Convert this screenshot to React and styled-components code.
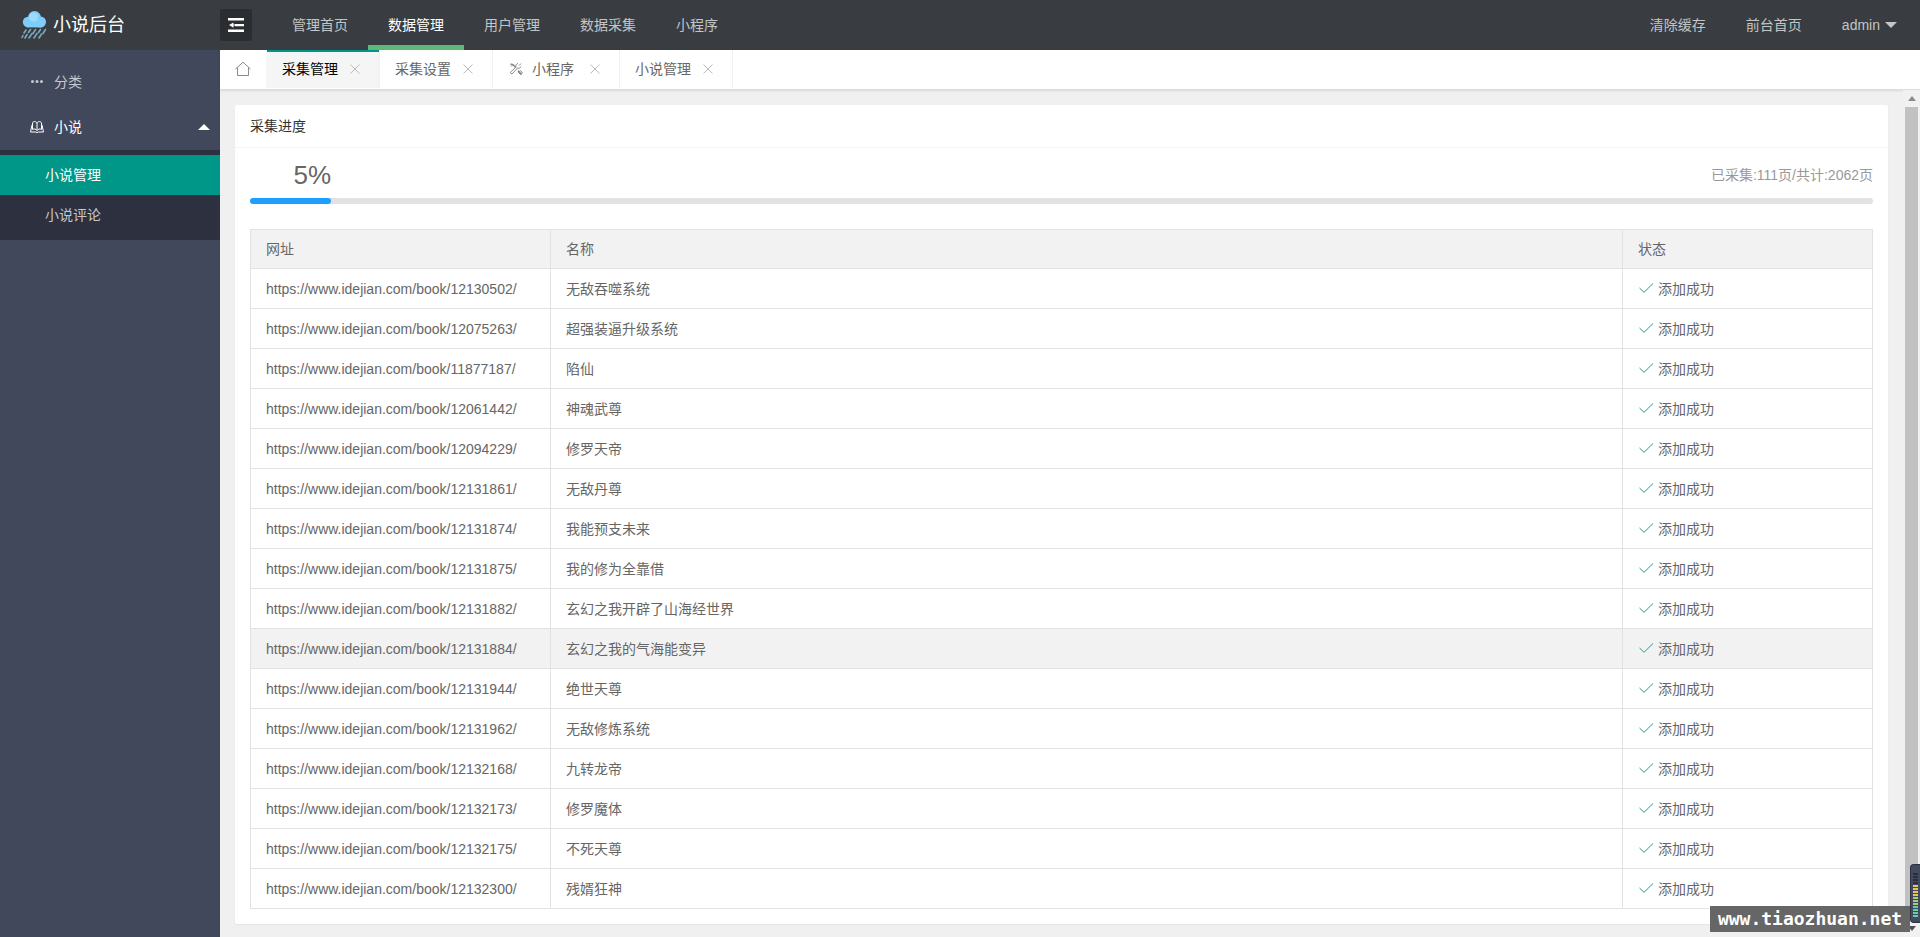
import React, { useState } from 'react'
import styled, { createGlobalStyle } from 'styled-components';

const GlobalStyle = createGlobalStyle`
  *{
    box-sizing:border-box;
  }
  body{
    margin:0;
    background-color:#f0f0f0;
    color:#666;
    font-family:"Liberation Sans", "Noto Sans CJK SC", sans-serif;
    font-size:14px;
    line-height:24px;
  }
  a{
    color:inherit;
    text-decoration:none;
  }
  button{
    padding:0;
    border:0;
    background:none;
    color:inherit;
    font:inherit;
    cursor:pointer;
  }
  svg{
    display:block;
    flex:none;
  }
`
const Page = styled.div`
  display:flex;
  flex-direction:column;
  height:100vh;
  overflow:hidden;
`
const Header = styled.header`
  display:flex;
  flex:none;
  height:50px;
  background-color:#393d41;
  color:#c3c5c6;
`
const Logo = styled.a`
  display:flex;
  align-items:center;
  gap:6px;
  width:220px;
  padding-left:21px;
  font-size:18px;
  color:#fff;
`
const Toggle = styled.button`
  display:flex;
  align-items:center;
  justify-content:center;
  align-self:center;
  width:32px;
  height:32px;
  margin-right:20px;
  border-radius:2px;
  background-color:#2b2e31;
`
const Nav = styled.nav`
  display:flex;
  &:last-child{
    margin-left:auto;
    padding-right:3px;
  }
`
const NavLink = styled.a`
  display:flex;
  align-items:center;
  gap:5px;
  padding:5px 20px 0;
  padding-bottom:${(props) => (props.$active ? '0' : '5px')};
  border-bottom:${(props) => (props.$active ? '5px solid #5fb878' : '0')};
  color:${(props) => (props.$active ? '#fff' : 'inherit')};
`
const Body = styled.div`
  display:flex;
  flex:1;
  min-height:0;
`
const Side = styled.aside`
  flex:none;
  width:220px;
  padding-top:10px;
  background-color:#42485b;
  color:#c6c8ce;
`
const SideLink = styled.a`
  display:flex;
  align-items:center;
  height:45px;
  padding:0 10px 2px 29px;
  color:${(props) => (props.$open ? '#fff' : 'inherit')};
  span{
    flex:1;
    margin-left:9px;
  }
`
const SubMenu = styled.div`
  padding:5px 0;
  background-color:#2d303e;
`
const SubLink = styled.a`
  display:block;
  padding-left:45px;
  line-height:40px;
  background-color:${(props) => (props.$active ? '#009688' : 'transparent')};
  color:${(props) => (props.$active ? '#fff' : 'inherit')};
`
const Main = styled.main`
  display:flex;
  flex-direction:column;
  flex:1;
  min-width:0;
`
const Tabs = styled.div`
  display:flex;
  flex:none;
  height:40px;
  padding-bottom:1px;
  border-bottom:1px solid #ddd;
  background-color:#fff;
  box-shadow:0 1px 2px rgba(0,0,0,.1);
`
const HomeTab = styled.button`
  display:flex;
  align-items:center;
  justify-content:center;
  width:47px;
  border-right:1px solid #f6f6f6;
`
const Tab = styled.div`
  display:flex;
  align-items:center;
  padding:0 14px 0 15px;
  border-right:1px solid #f0f0f0;
  background-color:${(props) => (props.$active ? '#f5f5f5' : '#fff')};
  box-shadow:${(props) => (props.$active ? 'inset 0 2px #009688' : 'none')};
  color:${(props) => (props.$active ? '#000' : '#666')};
`
const TabTitle = styled.button`
  display:flex;
  align-items:center;
  gap:8px;
  margin-right:${(props) => (props.$icon ? '11px' : '7px')};
`
const Close = styled.button`
  display:flex;
  align-items:center;
  justify-content:center;
  width:20px;
  height:20px;
`
const Frame = styled.div`
  display:flex;
  flex:1;
  min-height:0;
`
const Content = styled.div`
  flex:1;
  min-width:0;
  padding:15px;
  overflow:hidden;
`
const Card = styled.section`
  border-radius:2px;
  background-color:#fff;
  box-shadow:0 1px 2px rgba(0,0,0,.05);
`
const CardTitle = styled.h1`
  margin:0;
  padding:0 15px;
  border-bottom:1px solid #f6f6f6;
  font-size:14px;
  font-weight:normal;
  line-height:42px;
  color:#333;
`
const CardBody = styled.div`
  padding:10px 15px 15px;
`
const ProgressInfo = styled.div`
  display:flex;
  align-items:center;
  justify-content:space-between;
  height:40px;
  padding-bottom:6px;
  color:#999;
`
const Percent = styled.div`
  text-align:right;
  font-size:26px;
  color:#666;
`
const Progress = styled.div`
  height:6px;
  margin-bottom:25px;
  border-radius:3px;
  background-color:#e2e2e2;
  div{
    height:6px;
    border-radius:3px;
    background-color:#1e9fff;
  }
`
const Table = styled.table`
  width:100%;
  table-layout:fixed;
  border-collapse:collapse;
  th, td{
    height:40px;
    padding:0 15px;
    border:1px solid #e2e2e2;
    text-align:left;
    font-weight:normal;
  }
  th{
    height:39px;
    background-color:#f2f2f2;
  }
  th:first-child{
    width:300px;
  }
  th:last-child{
    width:250px;
  }
`
const Row = styled.tr`
  background-color:${(props) => (props.$hover ? '#f2f2f2' : '#fff')};
`
const Status = styled.span`
  display:flex;
  align-items:center;
  gap:4px;
`
const ScrollBar = styled.div`
  display:flex;
  flex-direction:column;
  align-items:center;
  flex:none;
  width:17px;
  background-color:#f1f1f1;
  svg{
    margin:6px 0;
  }
`
const Thumb = styled.div`
  flex:1;
  width:13px;
  background-color:#c1c1c1;
`
const Watermark = styled.div`
  position:fixed;
  right:10px;
  bottom:5px;
  width:200px;
  background-color:#666;
  color:#fff;
  text-align:center;
  font-family:"DejaVu Sans Mono", monospace;
  font-size:18px;
  font-weight:bold;
  line-height:26px;
`
const Meter = styled.div`
  position:fixed;
  right:0;
  bottom:14px;
  display:flex;
  flex-direction:column;
  align-items:center;
  gap:1px;
  width:10px;
  height:59px;
  padding-top:8px;
  border:1px solid #2c3142;
  border-right:0;
  border-radius:4px 0 0 4px;
  background-color:#434a5f;
`
const Led = styled.i`
  width:5px;
  height:2px;
  background-color:${(props) => props.$color};
`

const topMenu = ['管理首页', '数据管理', '用户管理', '数据采集', '小程序']
const tabList = [
  { title: '采集管理' },
  { title: '采集设置' },
  { title: '小程序', icon: true },
  { title: '小说管理' },
]
const books = [
  [12130502, '无敌吞噬系统'],
  [12075263, '超强装逼升级系统'],
  [11877187, '陷仙'],
  [12061442, '神魂武尊'],
  [12094229, '修罗天帝'],
  [12131861, '无敌丹尊'],
  [12131874, '我能预支未来'],
  [12131875, '我的修为全靠借'],
  [12131882, '玄幻之我开辟了山海经世界'],
  [12131884, '玄幻之我的气海能变异'],
  [12131944, '绝世天尊'],
  [12131962, '无敌修炼系统'],
  [12132168, '九转龙帝'],
  [12132173, '修罗魔体'],
  [12132175, '不死天尊'],
  [12132300, '残婿狂神'],
]
const leds = [
  ...Array(4).fill('#2a2f40'),
  ...Array(4).fill('#e5c65a'),
  ...Array(3).fill('#a9d068'),
  ...Array(4).fill('#5fd0a5'),
]

const RainIcon = () => (
  <svg width="26" height="30" viewBox="0 0 26 30">
    <g fill="#7fcdfb">
      <circle cx="7" cy="12" r="5.200" />
      <circle cx="13.500" cy="7.500" r="6.500" />
      <circle cx="19.500" cy="12" r="5.500" />
      <rect x="6" y="10" width="14" height="7.400" />
    </g>
    <circle cx="12.500" cy="7" r="4.500" fill="#9adafd" />
    <path d="M5 20l-2 3M9.500 19.500l-2 3M14.500 19.500l-2.500 4M19.500 19.500l-2 3M24.500 19.500l-2.500 4M6 24.500l-2 3.500M11 23.500l-3 4.500M16 23.500l-3 4.500M20.500 24l-2.500 4M2 25.500l-1 2" fill="none" stroke="#79a9c2" strokeWidth="1.600" strokeLinecap="round" />
  </svg>
)
const FoldIcon = () => (
  <svg width="16" height="14" viewBox="0 0 16 14">
    <path d="M0 0h16v2.500H0zM7 6h9v2.200H7zM0 11.500h16V14H0zM1 7.100l4.500-2.600v5.200zM4 6.600h4v1H4z" fill="#fff" />
  </svg>
)
const HomeIcon = () => (
  <svg width="16" height="16" viewBox="0 0 16 16">
    <path d="M.5 8L8 1.200 15.500 8M2.500 6.500V14.500h11V6.500" fill="none" stroke="#8a8a8a" strokeLinejoin="round" />
  </svg>
)
const CloseIcon = () => (
  <svg width="10" height="10" viewBox="0 0 10 10">
    <path d="M.5.5l9 9M9.500.5l-9 9" fill="none" stroke="#bbb" />
  </svg>
)
const ToolIcon = () => (
  <svg width="16" height="16" viewBox="0 0 16 16" fill="none" stroke="#8c8c8c">
    <path d="M2.500 3l2.500.8 3 3M10 9.500l3.500 4" strokeWidth="1.600" />
    <path d="M13 5.500a2.500 2.500 0 0 1-3.500 1.500L4 13l-1.800-1.500L8 6a2.500 2.500 0 0 1 2-3.500M11 4.500l2-2" />
    <path d="M10.500 11.500l2-2 2 2.500-2 1.500zM3 5.500l2-2" />
  </svg>
)
const DotsIcon = () => (
  <svg width="16" height="16" viewBox="0 0 16 16" fill="#c6c8ce">
    <circle cx="3.500" cy="7.500" r="1.500" />
    <circle cx="8" cy="7.500" r="1.500" />
    <circle cx="12.500" cy="7.500" r="1.500" />
  </svg>
)
const BookIcon = () => (
  <svg width="16" height="16" viewBox="0 0 16 16" fill="none" stroke="#fff">
    <path d="M8 11.500V4.500C7.500 2 4 2 3.500 4v6.500c1.500-1 3.500-.5 4.500 1 1-1.500 3-2 4.500-1V4C12 2 8.500 2 8 4.500" />
    <path d="M3 6l-1.500 7H6.500l1.500.6 1.500-.6h5L13 6" />
  </svg>
)
const CheckIcon = () => (
  <svg width="16" height="16" viewBox="0 0 16 16">
    <path d="M1.500 7L6 11.300 15 2.500" fill="none" stroke="#2b9b8f" />
  </svg>
)
const Arrow = ({ up, width = 12, height = 6, color }) => (
  <svg width={width} height={height} viewBox="0 0 12 6" preserveAspectRatio="none">
    <path d={up ? 'M0 6h12L6 0z' : 'M0 0h12L6 6z'} fill={color} />
  </svg>
)

export default function App() {
  const [menu, setMenu] = useState(1)
  const [tab, setTab] = useState(0)
  const [open, setOpen] = useState(true)

  const done = 111
  const total = 2062
  const percent = Math.floor(done / total * 100)

  return (
    <>
    <GlobalStyle />
    <Page>
      <Header>
        <Logo href="#"><RainIcon />小说后台</Logo>
        <Toggle aria-label="折叠菜单"><FoldIcon /></Toggle>
        <Nav>
          {topMenu.map((item, index) => (
            <NavLink key={item} href="#" $active={menu === index} onClick={() => setMenu(index)}>{item}</NavLink>
          ))}
        </Nav>
        <Nav>
          <NavLink href="#">清除缓存</NavLink>
          <NavLink href="#">前台首页</NavLink>
          <NavLink href="#">admin <Arrow color="#c3c5c6" /></NavLink>
        </Nav>
      </Header>
      <Body>
        <Side>
          <SideLink href="#"><DotsIcon /><span>分类</span></SideLink>
          <SideLink href="#" $open={open} onClick={() => setOpen(!open)}>
            <BookIcon /><span>小说</span><Arrow up={open} color="#fff" />
          </SideLink>
          {open && (
            <SubMenu>
              <SubLink href="#" $active>小说管理</SubLink>
              <SubLink href="#">小说评论</SubLink>
            </SubMenu>
          )}
        </Side>
        <Main>
          <Tabs>
            <HomeTab aria-label="首页"><HomeIcon /></HomeTab>
            {tabList.map((item, index) => (
              <Tab key={item.title} $active={tab === index}>
                <TabTitle $icon={item.icon} onClick={() => setTab(index)}>
                  {item.icon && <ToolIcon />}{item.title}
                </TabTitle>
                <Close aria-label="关闭"><CloseIcon /></Close>
              </Tab>
            ))}
          </Tabs>
          <Frame>
            <Content>
              <Card>
                <CardTitle>采集进度</CardTitle>
                <CardBody>
                  <ProgressInfo>
                    <Percent style={{ width: `${percent}%` }}>{percent}%</Percent>
                    <span>已采集:{done}页/共计:{total}页</span>
                  </ProgressInfo>
                  <Progress>
                    <div style={{ width: `${percent}%` }} />
                  </Progress>
                  <Table>
                    <thead>
                      <tr>
                        <th>网址</th>
                        <th>名称</th>
                        <th>状态</th>
                      </tr>
                    </thead>
                    <tbody>
                      {books.map(([id, name]) => (
                        <Row key={id} $hover={id === 12131884}>
                          <td>https://www.idejian.com/book/{id}/</td>
                          <td>{name}</td>
                          <td><Status><CheckIcon />添加成功</Status></td>
                        </Row>
                      ))}
                    </tbody>
                  </Table>
                </CardBody>
              </Card>
            </Content>
            <ScrollBar>
              <Arrow up width={8} height={5} color="#8a8a8a" />
              <Thumb />
              <Arrow width={8} height={5} color="#505050" />
            </ScrollBar>
          </Frame>
        </Main>
      </Body>
    </Page>
    <Meter>
      {leds.map((color, index) => <Led key={index} $color={color} />)}
    </Meter>
    <Watermark>www.tiaozhuan.net</Watermark>
    </>
  )
}
